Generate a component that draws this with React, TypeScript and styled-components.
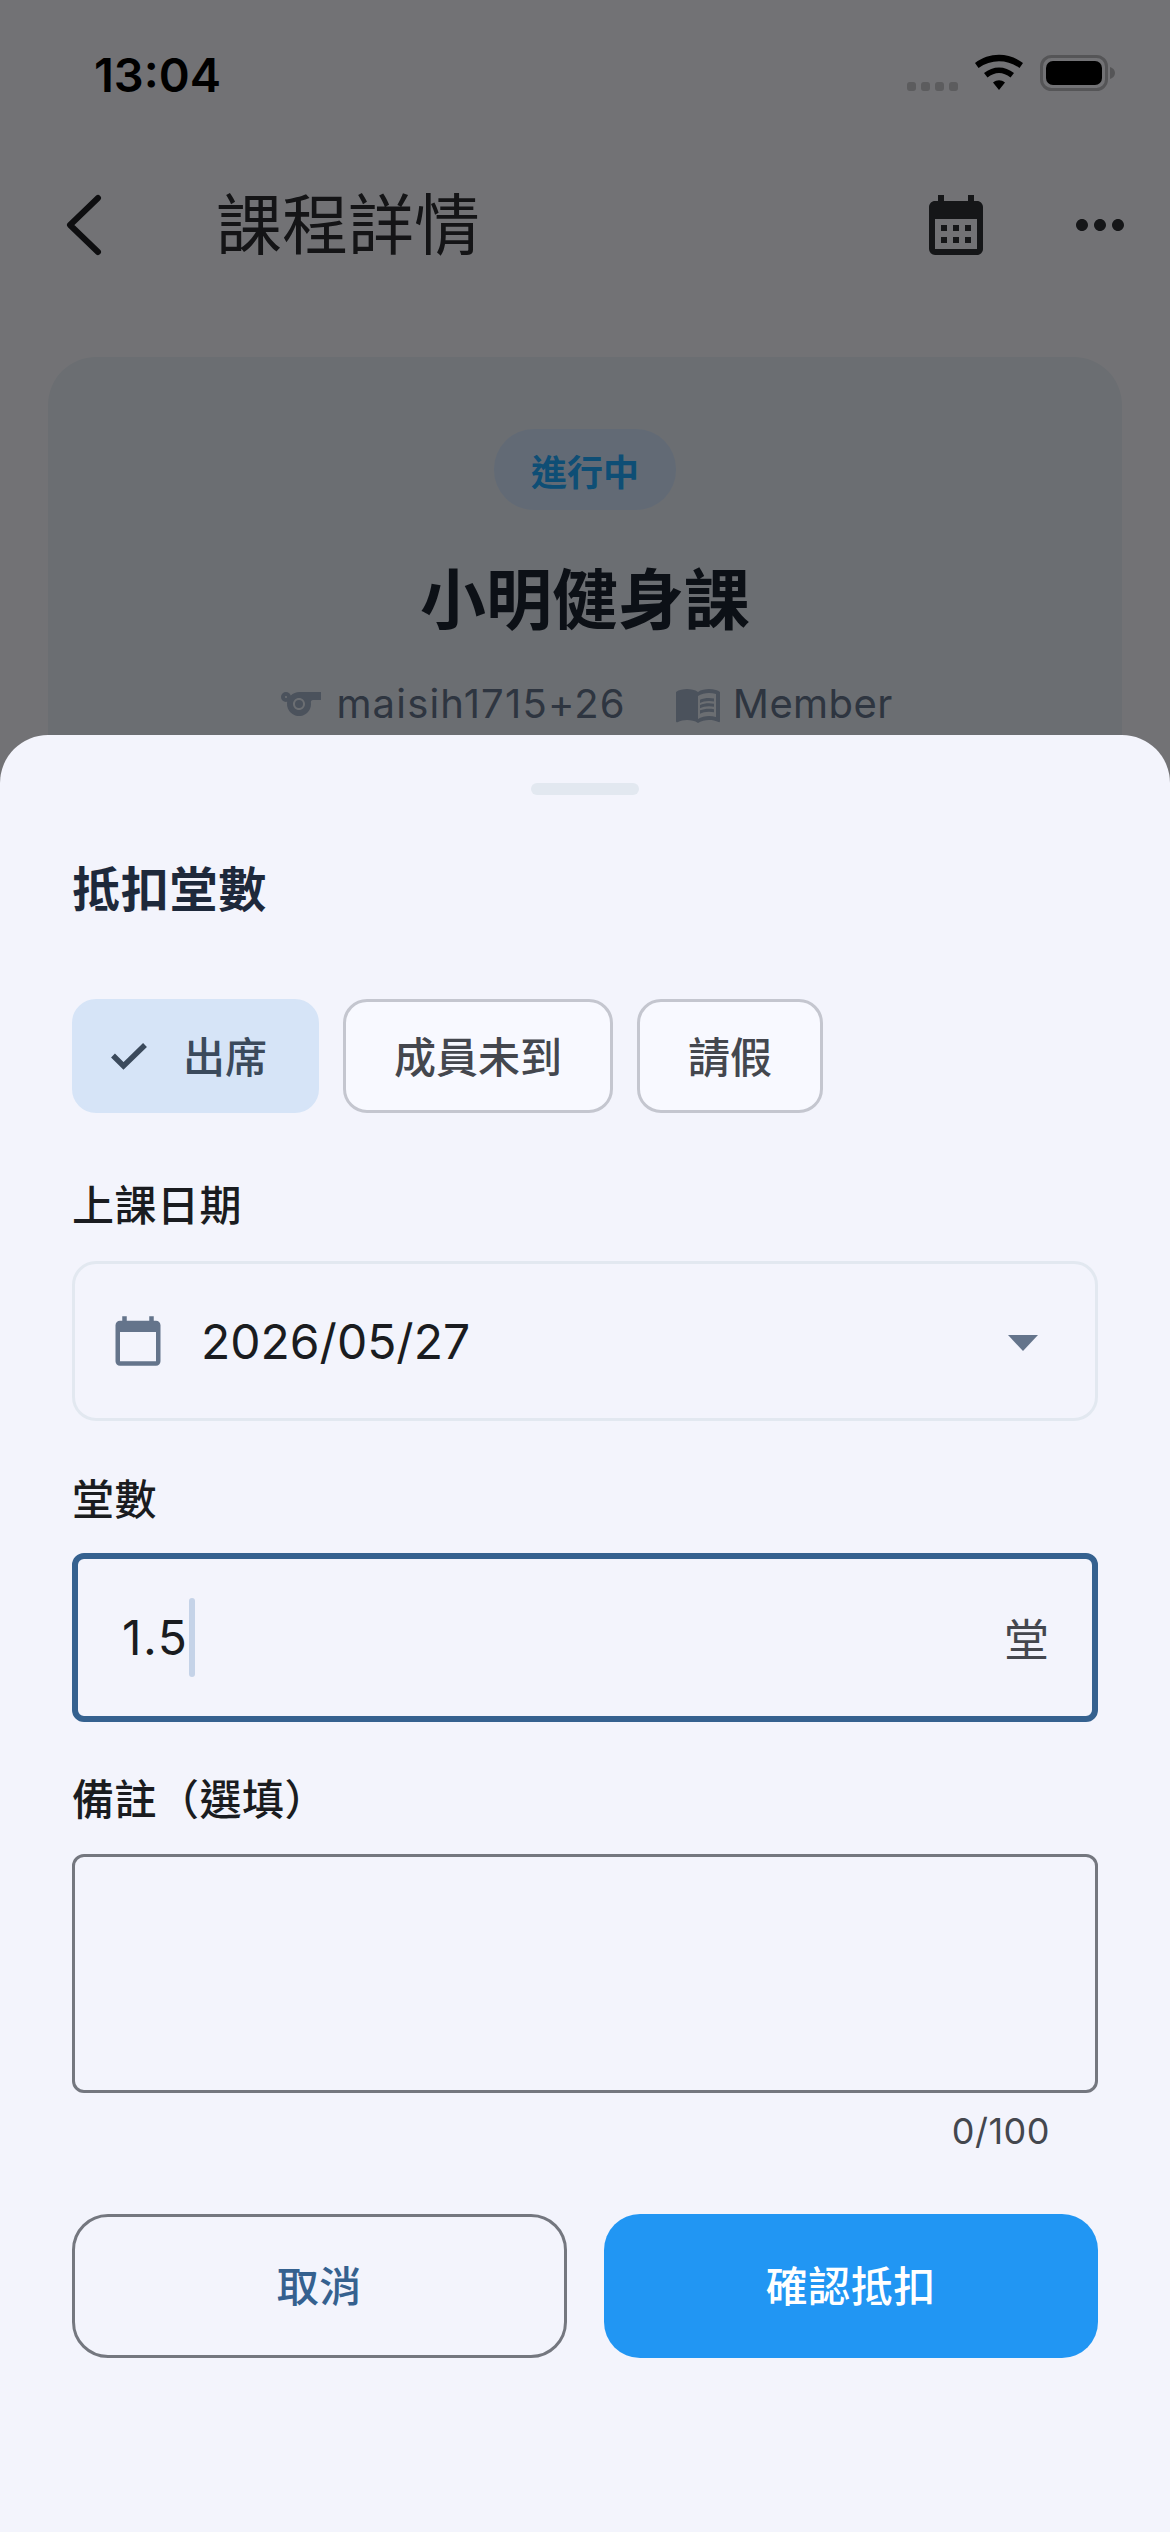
import React from 'react';
import styled, { createGlobalStyle } from 'styled-components';
import {
    MdCalendarMonth,
    MdCalendarToday,
    MdMenuBook,
    MdMoreHoriz,
    MdSports,
} from 'react-icons/md';

const GlobalStyle = createGlobalStyle`
    html, body {
        margin: 0;
        padding: 0;
        background: #f8f9ff;
    }
    * {
        box-sizing: border-box;
    }
    body {
        font-family: Inter, "Noto Sans CJK TC", sans-serif;
    }
`;

const Screen = styled.div`
    position: relative;
    width: 1170px;
    height: 2532px;
    overflow: hidden;
    background: #f8f9ff;
`;

const StatusBar = styled.div`
    position: relative;
    z-index: 2;
    height: 141px;
    padding: 47px 54px 0 94px;
    display: flex;
    justify-content: space-between;
    align-items: flex-start;
`;

const Clock = styled.span`
    font-size: 47px;
    line-height: 56px;
    font-weight: 600;
    color: #000;
`;

const StatusIcons = styled.svg`
    display: block;
    margin-top: 6px;
`;

const TopBar = styled.header`
    height: 168px;
    display: flex;
    align-items: center;
    padding: 0 34px 0 60px;
    color: #1f2024;
`;

const BackIcon = styled.svg`
    width: 48px;
    height: 64px;
    flex: none;
`;

const PageTitle = styled.h1`
    margin: 0 0 0 108px;
    flex: 1;
    font-size: 66px;
    line-height: 80px;
    font-weight: 400;
    color: #2c2d30;
`;

const BarAction = styled.span<{ $gap?: number }>`
    display: flex;
    margin-left: ${(p) => p.$gap || 0}px;
    font-size: 72px;
    color: #2f3136;
`;

const SummaryCard = styled.section`
    margin: 48px 48px 0;
    height: 700px;
    padding-top: 72px;
    border-radius: 48px;
    background: #e9eff8;
    display: flex;
    flex-direction: column;
    align-items: center;
`;

const StatusPill = styled.span`
    width: 182px;
    height: 81px;
    border-radius: 40px;
    background: #d5e8ff;
    display: flex;
    align-items: center;
    justify-content: center;
    font-size: 36px;
    font-weight: 600;
    color: #20aaff;
`;

const CourseName = styled.h2`
    margin: 50px 0 0;
    font-size: 66px;
    line-height: 80px;
    font-weight: 700;
    color: #1c2430;
`;

const MetaRow = styled.div`
    margin-top: 39px;
    display: flex;
    align-items: center;
    gap: 48px;
`;

const MetaItem = styled.span<{ $spacing: number }>`
    display: flex;
    align-items: center;
    gap: 11px;
    font-size: 40px;
    line-height: 50px;
    letter-spacing: ${(p) => p.$spacing}px;
    color: #64748b;
    svg {
        font-size: 48px;
        color: #a3b2c8;
    }
`;

const Scrim = styled.div`
    position: absolute;
    inset: 0;
    z-index: 1;
    background: rgba(0, 0, 0, 0.54);
`;

const Sheet = styled.div`
    position: absolute;
    z-index: 1;
    left: 0;
    right: 0;
    top: 735px;
    bottom: 0;
    padding: 48px 72px 0;
    border-radius: 48px 48px 0 0;
    background: #f3f4fc;
`;

const Handle = styled.div`
    width: 108px;
    height: 12px;
    margin: 0 auto;
    border-radius: 6px;
    background: #e2e8f0;
`;

const SheetTitle = styled.h3`
    margin: 65px 0 0;
    font-size: 48px;
    line-height: 60px;
    letter-spacing: 0.75px;
    font-weight: 700;
    color: #1e293b;
`;

const ChipRow = styled.div`
    margin-top: 79px;
    display: flex;
    gap: 24px;
`;

const Chip = styled.div<{ $selected?: boolean }>`
    height: 114px;
    padding: ${(p) => (p.$selected ? '0 49px 3px 36px' : '0 48px 3px')};
    border-radius: 24px;
    border: 3px solid ${(p) => (p.$selected ? '#d6e4f7' : '#c4c6cf')};
    background: ${(p) => (p.$selected ? '#d6e4f7' : '#f8f9ff')};
    color: ${(p) => (p.$selected ? '#3b4a5c' : '#44474e')};
    display: flex;
    align-items: center;
    gap: 36px;
    font-size: 42px;
    font-weight: 500;
`;

const CheckIcon = styled.svg`
    width: 36px;
    height: 28px;
    margin-top: 3px;
    flex: none;
`;

const FieldLabel = styled.div<{ $top: number }>`
    margin-top: ${(p) => p.$top}px;
    font-size: 42px;
    line-height: 60px;
    letter-spacing: 0.5px;
    font-weight: 500;
    color: #1a1c20;
`;

const DateField = styled.div`
    margin-top: 25px;
    height: 160px;
    padding: 0 42px 0 36px;
    border: 3px solid #e2e8f0;
    border-radius: 24px;
    display: flex;
    align-items: center;
    font-size: 48px;
    color: #1a1c20;
    svg {
        font-size: 54px;
        color: #64748b;
        flex: none;
    }
`;

const DateValue = styled.span`
    margin-left: 36px;
    flex: 1;
`;

const DropArrow = styled.span`
    width: 0;
    height: 0;
    border-left: 15px solid transparent;
    border-right: 15px solid transparent;
    border-top: 16px solid #64748b;
    margin: 3px 15px 0 0;
`;

const CountField = styled.div`
    margin-top: 23px;
    height: 169px;
    padding: 0 43px 0 44px;
    border: 6px solid #35618f;
    border-radius: 12px;
    display: flex;
    align-items: center;
    font-size: 48px;
    letter-spacing: 1.5px;
    color: #1a1c20;
`;

const Caret = styled.span`
    width: 6px;
    height: 79px;
    margin-left: 1px;
    border-radius: 3px;
    background: #c5d3e8;
`;

const Unit = styled.span`
    margin-left: auto;
    font-size: 45px;
    letter-spacing: 0;
    color: #44474e;
`;

const NoteArea = styled.textarea`
    display: block;
    width: 100%;
    height: 239px;
    margin-top: 24px;
    padding: 36px 44px;
    border: 3px solid #74777f;
    border-radius: 12px;
    background: transparent;
    resize: none;
    outline: none;
`;

const Counter = styled.div`
    margin-top: 16px;
    padding-right: 48px;
    text-align: right;
    font-size: 36px;
    line-height: 45px;
    letter-spacing: 0.5px;
    color: #44474e;
`;

const ActionRow = styled.div`
    margin-top: 60px;
    display: grid;
    grid-template-columns: 1fr 1fr;
    gap: 37px;
`;

const ActionButton = styled.div<{ $primary?: boolean }>`
    height: 144px;
    padding-bottom: 5px;
    border-radius: 36px;
    border: ${(p) => (p.$primary ? 'none' : '3px solid #74777f')};
    background: ${(p) => (p.$primary ? '#2196f3' : 'transparent')};
    color: ${(p) => (p.$primary ? '#fff' : '#35618f')};
    display: flex;
    align-items: center;
    justify-content: center;
    font-size: 42px;
    letter-spacing: 0.5px;
    font-weight: 500;
`;

const StatusGlyphs: React.FC = () => (
    <StatusIcons width="212" height="40" viewBox="0 0 212 40">
        <g fill="#5c5c5e">
            <rect x="3" y="29" width="9" height="9" rx="3" />
            <rect x="17" y="29" width="9" height="9" rx="3" />
            <rect x="31" y="29" width="9" height="9" rx="3" />
            <rect x="45" y="29" width="9" height="9" rx="3" />
        </g>
        <path
            d="M71 10C85 -1 105 -1 119 10L115.500 15C103 6 87 6 74.500 15ZM80 20C89 12.500 101 12.500 110 20L106.500 24.500C99 18.500 91 18.500 83.500 24.500ZM89 29.500C93 26.500 97 26.500 101 29.500L95 37Z"
            fill="#000"
        />
        <rect x="137.500" y="3.500" width="65" height="33" rx="10" fill="none" stroke="#555557" strokeWidth="3" />
        <rect x="142" y="8" width="56" height="24" rx="7" fill="#000" />
        <path d="M206 14C209 15 211 17 211 20C211 23 209 25 206 26Z" fill="#555557" />
    </StatusIcons>
);

const App: React.FC = () => (
    <Screen>
        <GlobalStyle />
        <StatusBar>
            <Clock>13:04</Clock>
            <StatusGlyphs />
        </StatusBar>
        <TopBar>
            <BackIcon viewBox="0 0 48 64">
                <path
                    d="M38 5L10 32L38 59"
                    fill="none"
                    stroke="currentColor"
                    strokeWidth="6"
                    strokeLinecap="round"
                    strokeLinejoin="round"
                />
            </BackIcon>
            <PageTitle>課程詳情</PageTitle>
            <BarAction>
                <MdCalendarMonth />
            </BarAction>
            <BarAction $gap={72}>
                <MdMoreHoriz />
            </BarAction>
        </TopBar>
        <SummaryCard>
            <StatusPill>進行中</StatusPill>
            <CourseName>小明健身課</CourseName>
            <MetaRow>
                <MetaItem $spacing={1.2}>
                    <MdSports />
                    maisih1715+26
                </MetaItem>
                <MetaItem $spacing={0.4}>
                    <MdMenuBook />
                    Member
                </MetaItem>
            </MetaRow>
        </SummaryCard>
        <Scrim />
        <Sheet>
            <Handle />
            <SheetTitle>抵扣堂數</SheetTitle>
            <ChipRow>
                <Chip $selected>
                    <CheckIcon viewBox="0 0 36 28">
                        <path d="M2 13.500L12.500 24L34 3" fill="none" stroke="currentColor" strokeWidth="5.500" />
                    </CheckIcon>
                    出席
                </Chip>
                <Chip>成員未到</Chip>
                <Chip>請假</Chip>
            </ChipRow>
            <FieldLabel $top={63}>上課日期</FieldLabel>
            <DateField>
                <MdCalendarToday />
                <DateValue>2026/05/27</DateValue>
                <DropArrow />
            </DateField>
            <FieldLabel $top={49}>堂數</FieldLabel>
            <CountField>
                1.5
                <Caret />
                <Unit>堂</Unit>
            </CountField>
            <FieldLabel $top={48}>備註（選填）</FieldLabel>
            <NoteArea readOnly />
            <Counter>0/100</Counter>
            <ActionRow>
                <ActionButton>取消</ActionButton>
                <ActionButton $primary>確認抵扣</ActionButton>
            </ActionRow>
        </Sheet>
    </Screen>
);

export default App;
